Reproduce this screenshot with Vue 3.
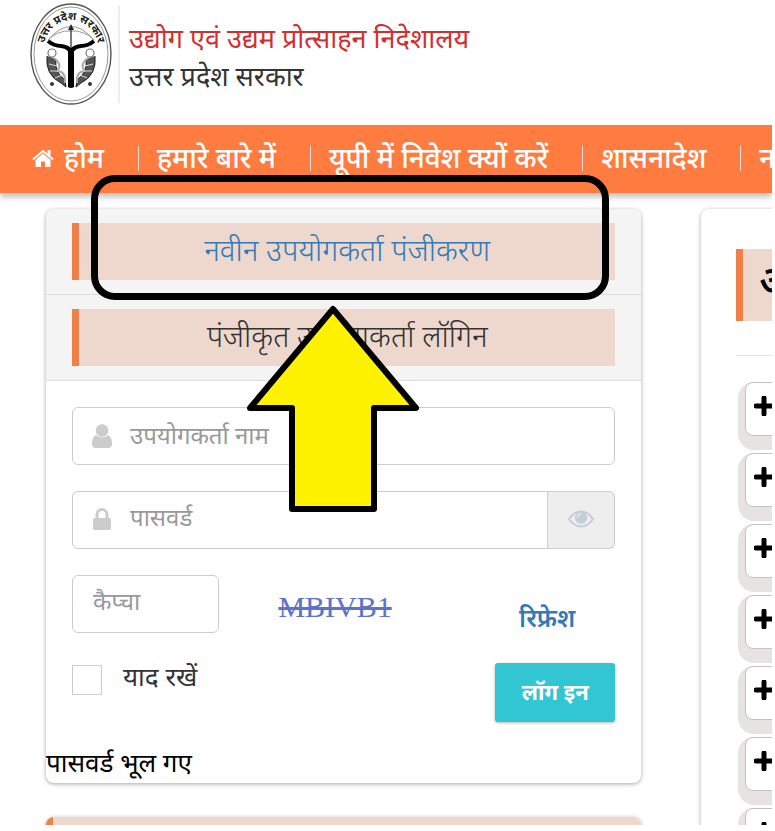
<template>
  <div class="page">
    <header class="brand">
      <svg class="emblem" viewBox="0 0 82 102" role="img" aria-label="उत्तर प्रदेश सरकार">
        <ellipse cx="41" cy="51" rx="40" ry="50" fill="#fff" stroke="#555" stroke-width="1.4" />
        <ellipse cx="41" cy="51" rx="37" ry="47" fill="none" stroke="#999" stroke-width="1" />
        <path id="arc" d="M13 49 A28 32 0 0 1 69 49" fill="none" />
        <text class="emblem-text">
          <textPath href="#arc" startOffset="50%" text-anchor="middle">उत्तर प्रदेश सरकार</textPath>
        </text>
        <!-- bow and arrow -->
        <path d="M18 37 Q41 10 64 37 M18 37 Q28 27 41 28 Q54 27 64 37" fill="none" stroke="#999" stroke-width="1" />
        <path d="M41 24 V47" fill="none" stroke="#222" stroke-width="1.2" />
        <path d="M41 21 L44 27 H38 Z" fill="#222" />
        <!-- rivers -->
        <path d="M18 38 Q24 43 31 43 Q41 44 41 52 Q41 44 51 43 Q58 43 64 38" fill="none" stroke="#000" stroke-width="4" />
        <path d="M38 46 H44 V84 Q41 86 38 84 Z" fill="#000" />
        <!-- fish -->
        <circle cx="22" cy="50" r="4" fill="#fff" stroke="#777" stroke-width="1.2" />
        <circle cx="60" cy="50" r="4" fill="#fff" stroke="#777" stroke-width="1.2" />
        <path d="M17 53 Q15 72 31 80 L36 84 L35 77 Q24 69 26 56" fill="#555" stroke="#222" />
        <path d="M65 53 Q67 72 51 80 L46 84 L47 77 Q58 69 56 56" fill="#555" stroke="#222" />
        <path d="M24 55 Q32 60 28 68 Q36 69 35 80 M58 55 Q50 60 54 68 Q46 69 47 80" fill="none" stroke="#aaa" stroke-width="2" />
        <path d="M19 61 L27 63 M20 68 L29 68 M25 75 L32 72 M63 61 L55 63 M62 68 L53 68 M57 75 L50 72" stroke="#ddd" stroke-width="1" />
        <circle cx="22" cy="81" r="2" fill="#333" />
        <circle cx="60" cy="81" r="2" fill="#333" />
      </svg>
      <div class="brand-text">
        <p class="dept">उद्योग एवं उद्यम प्रोत्साहन निदेशालय</p>
        <p class="gov">उत्तर प्रदेश सरकार</p>
      </div>
    </header>

    <nav class="menu">
      <a v-for="item in menu" :key="item" href="#">
        <svg v-if="item === 'होम'" class="home" viewBox="0 0 22 19" aria-hidden="true">
          <path d="M11 4.5 L18.5 11 V18 H13 V12.5 H9 V18 H3.5 V11 Z" fill="currentColor" />
          <path d="M1 10.5 L11 2 L21 10.5" fill="none" stroke="currentColor" stroke-width="2" />
          <path d="M15.5 1 H18.5 V8 L15.5 5.5 Z" fill="currentColor" />
        </svg>
        <span>{{ item }}</span>
      </a>
    </nav>

    <main class="columns">
      <div class="left">
        <section class="panel">
          <div class="panel-head">
            <a class="band" href="#">नवीन उपयोगकर्ता पंजीकरण</a>
          </div>
          <div class="panel-head">
            <h2 class="band">पंजीकृत उपयोगकर्ता लॉगिन</h2>
          </div>

          <form class="login" @submit.prevent>
            <div class="field">
              <svg class="icon" viewBox="0 0 20 24" aria-hidden="true">
                <path d="M4 11 Q10 16 16 11 Q20 13 20 20 Q20 24 16 24 H4 Q0 24 0 20 Q0 13 4 11 Z" fill="#ccc" />
                <circle cx="10" cy="6.5" r="6.3" fill="#ccc" />
              </svg>
              <input v-model="form.user" aria-label="उपयोगकर्ता नाम" placeholder="उपयोगकर्ता नाम" />
            </div>
            <div class="field">
              <svg class="icon" viewBox="0 0 20 24" aria-hidden="true">
                <rect x="1" y="10" width="18" height="12" rx="1.5" fill="#ccc" />
                <path d="M5 11 V6.5 A5 5 0 0 1 15 6.5 V11" fill="none" stroke="#ccc" stroke-width="3" />
              </svg>
              <input
                v-model="form.password"
                class="with-addon"
                :type="visible ? 'text' : 'password'"
                aria-label="पासवर्ड"
                placeholder="पासवर्ड"
              />
              <button class="eye" type="button" aria-label="पासवर्ड दिखाएं" @click="visible = !visible">
                <svg viewBox="0 0 26 18" aria-hidden="true">
                  <path d="M1 9 Q6 1.5 13 1.5 Q20 1.5 25 9 Q20 16.5 13 16.5 Q6 16.5 1 9 Z" fill="none" stroke="#c5cddb" stroke-width="2" />
                  <circle cx="13" cy="7.5" r="6.2" fill="#c5cddb" />
                  <path d="M9.5 7.5 Q9.5 4 13 4" fill="none" stroke="#eee" stroke-width="1.2" />
                </svg>
              </button>
            </div>

            <div class="row">
              <input v-model="form.captcha" class="captcha-input" aria-label="कैप्चा" placeholder="कैप्चा" />
              <span class="captcha">MBIVB1</span>
              <a class="refresh" href="#">रिफ्रेश</a>
            </div>

            <div class="row actions">
              <label class="remember">
                <input v-model="form.remember" type="checkbox" />
                <span>याद रखें</span>
              </label>
              <button class="submit" type="submit">लॉग इन</button>
            </div>
          </form>
          <a class="forgot" href="#">पासवर्ड भूल गए</a>
        </section>

        <section class="panel next">
          <div class="band"></div>
        </section>
      </div>

      <section class="panel right">
        <h1 class="band">अ</h1>
        <hr />
        <div v-for="n in 7" :key="n" class="entry">
          <button type="button" aria-label="खोलें">
            <svg viewBox="0 0 20 20" aria-hidden="true">
              <path d="M10 2 V18 M2 10 H18" stroke="#000" stroke-width="5" stroke-linecap="round" />
            </svg>
          </button>
        </div>
      </section>
    </main>

    <!-- highlight over the registration link -->
    <div class="marker"></div>
    <svg class="arrow" viewBox="0 0 176 210" aria-hidden="true">
      <path
        d="M88 7 L171 106 H129 V207 H47 V106 H5 Z"
        fill="#fff200"
        stroke="#000"
        stroke-width="6"
        stroke-linejoin="round"
      />
    </svg>
  </div>
</template>

<script setup>
import { ref } from 'vue'

const menu = ['होम', 'हमारे बारे में', 'यूपी में निवेश क्यों करें', 'शासनादेश', 'न']

const form = ref({ user: '', password: '', captcha: '', remember: false })
const visible = ref(false)
</script>

<style>
body {
  margin: 0;
  background: #fff;
}
</style>

<style scoped>
.page {
  position: relative;
  height: calc(100vh - 6px);
  margin-right: 3px;
  overflow: hidden;
  font-family: 'Noto Sans', 'Noto Sans Devanagari', 'Open Sans', sans-serif;
  color: #333;
}
.page * {
  box-sizing: border-box;
}
.page a {
  text-decoration: none;
}
.brand {
  display: flex;
  height: 125px;
  padding: 3px 0 0 30px;
}
.emblem {
  width: 82px;
  height: 102px;
}
.emblem-text {
  font-size: 11px;
  font-weight: bold;
  fill: #222;
}
.brand-text {
  height: 98px;
  margin: 2px 0 0 6px;
  padding: 14px 0 0 9px;
  border-left: 2px solid #eee;
  font-size: 27px;
  line-height: 38px;
  white-space: nowrap;
}
.brand-text p {
  margin: 0;
}
.dept {
  color: #d32f2f;
}
.menu {
  display: flex;
  height: 68px;
  padding: 21px 0 0 14px;
  background: #ff7c41;
  box-shadow: 0 4px 6px rgba(0, 0, 0, 0.25);
}
.menu a {
  display: flex;
  flex: none;
  align-items: center;
  gap: 10px;
  height: 25px;
  padding: 0 34px 0 18px;
  color: #fff;
  font-size: 28px;
  line-height: 25px;
  font-weight: 500;
  white-space: nowrap;
}
.menu a + a {
  border-left: 1px solid #ddd;
}
.menu span {
  padding-bottom: 2px;
}
.home {
  width: 22px;
  height: 19px;
}
.columns {
  display: flex;
  align-items: flex-start;
  gap: 60px;
  padding: 16px 0 0 46px;
}
.left {
  flex: none;
  width: 82%;
}
.panel {
  border-radius: 8px;
  background: #fff;
  box-shadow: 0 1px 4px rgba(0, 0, 0, 0.35);
}
.panel-head {
  padding: 14px 26px;
  border-bottom: 1px solid #ddd;
  background: #f4f4f4;
}
.panel-head:first-child {
  border-radius: 8px 8px 0 0;
}
.band {
  display: block;
  margin: 0;
  border-left: 7px solid #f0804a;
  background: #eed8ce;
  font-size: 30px;
  line-height: 57px;
  font-weight: 300;
  text-align: center;
  white-space: nowrap;
}
.panel-head .band {
  padding-bottom: 3px;
  line-height: 54px;
}
a.band {
  color: #337ab7;
}
.login {
  padding: 26px 26px 0;
}
.field {
  position: relative;
  display: flex;
  height: 58px;
  margin-bottom: 26px;
}
.icon {
  position: absolute;
  top: 17px;
  left: 20px;
  width: 20px;
  height: 24px;
}
.login input:not([type='checkbox']) {
  width: 100%;
  min-width: 0;
  height: 58px;
  padding: 0 20px 4px 57px;
  border: 1px solid #ccc;
  border-radius: 6px;
  outline: none;
  background: #fff;
  color: #555;
  font-family: inherit;
  font-size: 24px;
}
.login input::placeholder {
  color: #999;
  opacity: 1;
}
.login .with-addon:not([type='checkbox']) {
  padding-bottom: 8px;
  border-radius: 6px 0 0 6px;
}
.eye {
  flex: none;
  width: 67px;
  padding: 0;
  border: 1px solid #ccc;
  border-left: 0;
  border-radius: 0 6px 6px 0;
  background: #eee;
}
.eye svg {
  width: 26px;
  height: 18px;
}
.row {
  display: flex;
  align-items: center;
  justify-content: space-between;
}
.login .captcha-input:not([type='checkbox']) {
  width: 147px;
  padding-bottom: 8px;
  padding-left: 20px;
}
.captcha {
  padding-top: 6px;
  color: #5b74c9;
  font-family: 'Liberation Serif', serif;
  font-size: 30px;
  text-decoration: line-through;
}
.refresh {
  padding: 26px 40px 0 68px;
  color: #337ab7;
  font-size: 25px;
  line-height: 32px;
  font-weight: 600;
}
.actions {
  margin-top: 30px;
}
.remember {
  display: flex;
  gap: 21px;
  align-items: center;
  margin-top: -26px;
  font-size: 26px;
  line-height: 30px;
}
.remember span {
  padding-bottom: 8px;
}
.remember input {
  width: 30px;
  height: 30px;
  margin: 0;
  appearance: none;
  border: 1px solid #ccc;
  background: #fff;
}
.remember input:checked {
  background: #32c5d2;
}
.submit {
  width: 120px;
  height: 59px;
  padding: 0 0 4px;
  border: 0;
  border-radius: 3px;
  background: #32c5d2;
  box-shadow: 0 1px 3px rgba(0, 0, 0, 0.3);
  color: #fff;
  font-family: inherit;
  font-size: 22px;
  font-weight: 700;
}
.forgot {
  display: block;
  padding-bottom: 3px;
  margin-top: 22px;
  color: #000;
  font-size: 26px;
  line-height: 36px;
}
.next {
  margin-top: 34px;
  overflow: hidden;
}
.next .band {
  height: 57px;
}
.right {
  flex: none;
  width: 600px;
  height: 680px;
  padding: 40px 35px;
}
.right .band {
  padding: 0 0 12px 16px;
  color: #000;
  font-size: 40px;
  line-height: 60px;
  font-weight: 600;
  text-align: left;
}
.right hr {
  height: 1px;
  margin: 34px 0 26px;
  border: 0;
  background: #e5e5e5;
}
.entry {
  height: 68px;
  margin: 0 0 3px 2px;
  padding-left: 7px;
  border-radius: 16px;
  background: #e7e3e3;
}
.entry button {
  display: block;
  width: 100%;
  height: 54px;
  padding: 0 0 4px 8px;
  border: 1px solid #c5c2c5;
  border-radius: 8px;
  background: #fff;
  text-align: left;
}
.entry svg {
  width: 20px;
  height: 20px;
}
.marker {
  position: absolute;
  top: 175px;
  left: 91px;
  width: 518px;
  height: 125px;
  border: 7px solid #000;
  border-radius: 24px;
}
.arrow {
  position: absolute;
  top: 302px;
  left: 245px;
  width: 176px;
  height: 210px;
}
</style>
